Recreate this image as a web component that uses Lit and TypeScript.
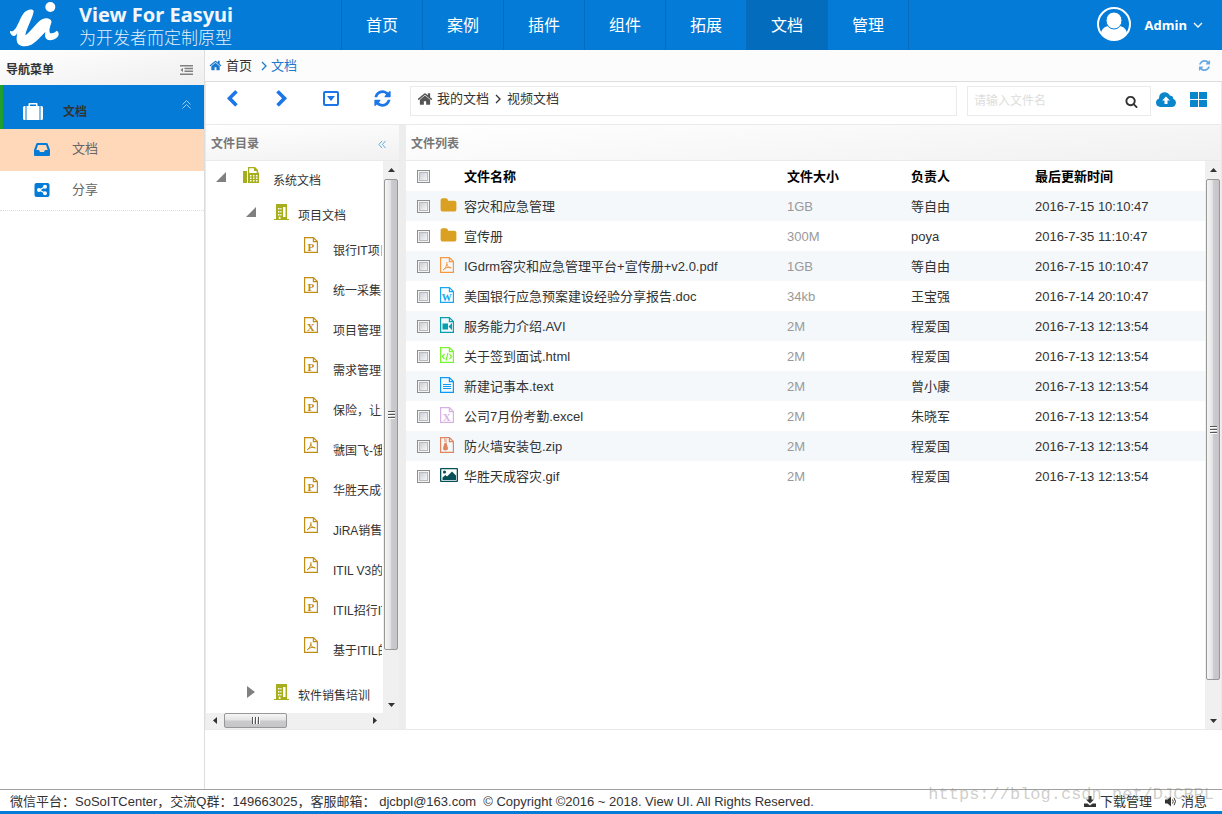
import { LitElement, html, svg, css, nothing } from "lit";
import { customElement, property, state } from "lit/decorators.js";
import { classMap } from "lit/directives/class-map.js";

/* Solid glyphs on a 1792-unit grid. */
const GLYPHS: Record<string, string> = {
  home: "M1472 992v480q0 26-19 45t-45 19h-384v-384h-256v384h-384q-26 0-45-19t-19-45v-480q0-1 .5-3t.5-3l575-474 575 474q1 2 1 6zm223-69l-62 74q-8 9-21 11h-3q-13 0-21-7l-692-577-692 577q-12 8-24 7-13-2-21-11l-62-74q-8-10-7-23.5t11-21.5l719-599q32-26 76-26t76 26l244 204v-195q0-14 9-23t23-9h192q14 0 23 9t9 23v408l219 182q10 8 11 21.5t-7 23.5z",
  refresh: "M1639 1056q0 5-1 7-64 268-268 434.5t-478 166.5q-146 0-282.5-55t-243.5-157l-129 129q-19 19-45 19t-45-19-19-45v-448q0-26 19-45t45-19h448q26 0 45 19t19 45-19 45l-137 137q71 66 161 102t187 36q134 0 250-65t186-179q11-17 53-117 8-23 30-23h192q13 0 22.5 9.5t9.5 22.5zm25-800v448q0 26-19 45t-45 19h-448q-26 0-45-19t-19-45 19-45l138-138q-148-137-349-137-134 0-250 65t-186 179q-11 17-53 117-8 23-30 23h-199q-13 0-22.5-9.5t-9.5-22.5v-7q65-268 270-434.5t480-166.5q146 0 284 55.5t245 156.5l130-129q19-19 45-19t45 19 19 45z",
  left: "M1427 301l-531 531 531 531q19 19 19 45t-19 45l-166 166q-19 19-45 19t-45-19l-742-742q-19-19-19-45t19-45l742-742q19-19 45-19t45 19l166 166q19 19 19 45t-19 45z",
  right: "M1363 877l-742 742q-19 19-45 19t-45-19l-166-166q-19-19-19-45t19-45l531-531-531-531q-19-19-19-45t19-45l166-166q19-19 45-19t45 19l742 742q19 19 19 45t-19 45z",
  search: "M1216 832q0-185-131.5-316.5t-316.5-131.5-316.5 131.5-131.5 316.5 131.5 316.5 316.5 131.5 316.5-131.5 131.5-316.5zm512 832q0 52-38 90t-90 38q-54 0-90-38l-343-342q-179 124-399 124-143 0-273.5-55.5t-225-150-150-225-55.5-273.5 55.5-273.5 150-225 225-150 273.5-55.5 273.5 55.5 225 150 150 225 55.5 273.5q0 220-124 399l343 343q37 37 37 90z",
  folder: "M1728 608v704q0 92-66 158t-158 66h-1216q-92 0-158-66t-66-158v-960q0-92 66-158t158-66h320q92 0 158 66t66 158v32h672q92 0 158 66t66 158z",
};

const glyph = (name: string, size: number) =>
  html`<svg width=${size} height=${size} viewBox="0 0 1792 1792" fill="currentColor" aria-hidden="true"><path d=${GLYPHS[name]}></path></svg>`;

const angle = (size: number) =>
  html`<svg width=${size} height=${size} viewBox="0 0 10 10" fill="none" stroke="currentColor" stroke-width="1.3" aria-hidden="true"><path d="M3 1l4 4-4 4"></path></svg>`;

const letterMark = (ch: string, size = 11) =>
  svg`<text x="6.8" y="13.5" text-anchor="middle" font-family="Liberation Serif, serif" font-weight="700" font-size=${size} fill="currentColor">${ch}</text>`;

const MARKS: Record<string, unknown> = {
  p: letterMark("P"),
  x: letterMark("X"),
  w: letterMark("W", 10),
  pdf: svg`<path d="M3 13c2-1 4-4 4-8M7 7c0 2.500 2 4 4.500 4M3.500 12.500c2-2 5-2.500 7.500-2" stroke="currentColor" fill="none"/>`,
  video: svg`<path d="M2.500 6.500h5.500v6h-5.500zM8.500 9.500l3.500-3.500v7z" fill="currentColor"/>`,
  code: svg`<path d="M4.500 7L2.300 9.500l2.200 2.500M9.500 7l2.200 2.500-2.200 2.500M7.900 6l-1.700 7.500" stroke="currentColor" stroke-width="1.200" fill="none"/>`,
  text: svg`<path d="M3 7.500h8M3 9.500h8M3 11.500h8" stroke="currentColor" stroke-width="1.200" fill="none"/>`,
  zip: svg`<path d="M4 1.500h1.500v1H4zM5.500 2.500H7v1H5.500zM4 3.500h1.500v1H4zM5.500 4.500H7v1H5.500zM4.500 6h2l1.500 5q0 2.500-2.500 2.500T3 11z" fill="currentColor"/>`,
};

const fileIcon = (kind: string) => {
  if (kind === "folder") return glyph("folder", 17);
  if (kind === "image")
    return html`<svg width="18" height="16" viewBox="0 0 18 16" aria-hidden="true"><path fill="currentColor" fill-rule="evenodd" d="M1 1h16q1 0 1 1v12q0 1-1 1H1q-1 0-1-1V2q0-1 1-1zM1.300 2.300v11.400h15.400V2.300z"/><circle cx="4.500" cy="5" r="1.600" fill="currentColor"/><path fill="currentColor" d="M2.500 13v-2.500l3-2.500 1.500 1.500L12 4.500l4 4V13z"/></svg>`;
  return html`<svg width="14" height="16" viewBox="0 0 14 16" aria-hidden="true"><path fill="none" stroke="currentColor" stroke-width="1.200" d="M.6.6h8.800l4 4v10.800H.6zM9.400.6v4h4"/>${MARKS[kind]}</svg>`;
};

/* Classic bevelled scroll bar with end arrows. */
@customElement("classic-scrollbar")
class ClassicScrollbar extends LitElement {
  @property({ type: Boolean, reflect: true }) horizontal = false;
  @property({ type: Number }) before = 0;
  @property({ type: Number }) size = 1;
  @property({ type: Number }) after = 1;

  static styles = css`
    :host { display: flex; flex-direction: column; width: 16px; flex: none; background: #f0f0f0; box-sizing: border-box; padding: 0 1px; }
    :host([horizontal]) { flex-direction: row; width: auto; height: 16px; padding: 0 0 1px; }
    .end { flex: 0 0 18px; display: grid; place-items: center; color: #333; }
    .thumb {
      box-sizing: border-box; border: 1px solid #979797; border-radius: 2px; display: flex; flex-direction: column; gap: 1px;
      align-items: center; justify-content: center; background: linear-gradient(to right, #f6f6f6, #e4e4e6 45%, #cbcbcf 55%, #c6c6ca);
    }
    :host([horizontal]) .thumb { flex-direction: row; background: linear-gradient(#f6f6f6, #e4e4e6 45%, #cbcbcf 55%, #c6c6ca); }
    .grip { width: 7px; height: 1px; background: #555; border-bottom: 1px solid #fff; }
    :host([horizontal]) .grip { width: 1px; height: 7px; border-bottom: 0; border-right: 1px solid #fff; }
  `;

  render() {
    const arrow = (d: string) => html`<svg width="7" height="7" viewBox="0 0 7 7" fill="currentColor"><path d=${d}></path></svg>`;
    const h = this.horizontal;
    return html`
      <span class="end">${arrow(h ? "M5 0v7L1 3.500z" : "M0 5h7L3.500 1z")}</span>
      <span style="flex:${this.before}"></span>
      <span class="thumb" style="flex:${this.size}"><i class="grip"></i><i class="grip"></i><i class="grip"></i></span>
      <span style="flex:${this.after}"></span>
      <span class="end">${arrow(h ? "M2 0v7L6 3.500z" : "M0 2h7L3.500 6z")}</span>
    `;
  }
}

const TREE_FILES = [
  ["p", "银行IT项目管理"],
  ["p", "统一采集平台"],
  ["x", "项目管理办法"],
  ["p", "需求管理平台"],
  ["p", "保险，让生活"],
  ["pdf", "虢国飞-饿了么"],
  ["p", "华胜天成介绍"],
  ["pdf", "JiRA销售培训"],
  ["pdf", "ITIL V3的介绍"],
  ["p", "ITIL招行IT服务"],
  ["pdf", "基于ITIL的管理"],
];

const ROWS = [
  ["folder", "#daa021", "容灾和应急管理", "1GB", "等自由", "2016-7-15 10:10:47"],
  ["folder", "#daa021", "宣传册", "300M", "poya", "2016-7-35 11:10:47"],
  ["pdf", "#f79840", "IGdrm容灾和应急管理平台+宣传册+v2.0.pdf", "1GB", "等自由", "2016-7-15 10:10:47"],
  ["w", "#18a8f1", "美国银行应急预案建设经验分享报告.doc", "34kb", "王宝强", "2016-7-14 20:10:47"],
  ["video", "#059fae", "服务能力介绍.AVI", "2M", "程爱国", "2016-7-13 12:13:54"],
  ["code", "#78f52c", "关于签到面试.html", "2M", "程爱国", "2016-7-13 12:13:54"],
  ["text", "#0c9af5", "新建记事本.text", "2M", "曾小康", "2016-7-13 12:13:54"],
  ["x", "#d9b0e6", "公司7月份考勤.excel", "2M", "朱晓军", "2016-7-13 12:13:54"],
  ["zip", "#e08562", "防火墙安装包.zip", "2M", "程爱国", "2016-7-13 12:13:54"],
  ["image", "#07505a", "华胜天成容灾.gif", "2M", "程爱国", "2016-7-13 12:13:54"],
];

const NAV = ["首页", "案例", "插件", "组件", "拓展", "文档", "管理"];

@customElement("app-root")
class AppRoot extends LitElement {
  @state() private activeNav = "文档";
  @state() private treeOpen = true;

  static styles = css`
    :host {
      display: flex; flex-direction: column; height: 100vh; position: relative; overflow: hidden; background: #fff;
      font: 13px/20px "Liberation Sans", "Noto Sans CJK SC", sans-serif; color: #333;
    }
    * { box-sizing: border-box; }
    a { color: inherit; text-decoration: none; }
    button { font: inherit; color: inherit; background: none; border: 0; padding: 0; margin: 0; cursor: pointer; }
    ul { list-style: none; margin: 0; padding: 0; }
    svg { display: block; flex: none; }

    .top { flex: none; height: 50px; display: flex; background: #047bd7; color: #fff; }
    .brand { width: 341px; display: flex; padding-left: 10px; gap: 19px; }
    .brand-text { display: flex; flex-direction: column; padding-top: 2px; }
    .brand-name { font: 700 20px/26px "Noto Sans", sans-serif; color: #f2f6fa; white-space: nowrap; }
    .brand-sub { font: 300 17px/18px "Noto Sans CJK SC", sans-serif; color: #e4f0fa; white-space: nowrap; }
    .nav { display: flex; border-right: 1px solid #056bbb; }
    .nav a { border-left: 1px solid #056bbb; padding: 2px 24px 0; font-size: 16px; line-height: 48px; }
    .nav a.active { background: #046cbd; }
    .user { margin-left: auto; padding-right: 19px; display: flex; align-items: center; gap: 14px; font: 700 13px/48px "Open Sans", sans-serif; }
    .user .face { margin-bottom: 2px; }
    .user .caret { transform: rotate(90deg); margin-left: -8px; }

    .body { flex: 1; min-height: 0; display: flex; }
    .side { flex: none; width: 205px; border-right: 1px solid #ddd; }
    .side-head { height: 35px; display: flex; align-items: center; justify-content: space-between; padding: 4px 11px 0 6px; font-size: 12px; font-weight: 700; background: linear-gradient(170deg, #fff, #efefef); }
    .side-head svg { color: #808080; }
    .group { width: 100%; height: 44px; display: flex; align-items: center; background: #047bd7; border-left: 3px solid #1f9f2f; padding: 8px 13px 0 20px; font-size: 12px; font-weight: 700; }
    .group > span { margin-left: 20px; flex: 1; text-align: left; padding-top: 2px; }
    .group .suitcase { color: #fff; }
    .group .fold { color: #9ccdf5; align-self: flex-start; margin-top: 7px; }
    .sub { display: flex; align-items: center; gap: 22px; height: 40px; padding: 0 34px 2px; color: #666; border-bottom: 1px dotted #ddd; }
    .sub svg { color: #047bd7; }
    .sub.active { background: #ffd8ba; height: 42px; border-bottom: 0; }

    .main { flex: 1; min-width: 0; display: flex; flex-direction: column; padding-bottom: 59px; }
    .crumbs { flex: none; height: 32px; display: flex; align-items: center; padding: 0 11px 0 4px; gap: 4px; background: #fcfcfc; border-bottom: 1px solid #ddd; }
    .crumbs .home, .crumbs .here { color: #1a79cd; }
    .crumbs .sep { color: #1a79cd; margin-left: 3px; margin-right: -2px; }
    .crumbs button { margin-left: auto; color: #67a9e6; }
    .work { flex: 1; min-height: 0; display: flex; flex-direction: column; border: 1px solid #eaeaea; border-top: 0; }
    .tools { flex: none; height: 43px; display: flex; align-items: flex-start; padding: 4px 14px 0 17px; border-bottom: 1px solid #eaeaea; }
    .tool { width: 50px; height: 25px; display: grid; place-items: center; color: #1c76e8; justify-items: start; }
    .tool.last { width: 37px; }
    .path { flex: 1; height: 30px; border: 1px solid #eaeaea; padding: 0 6px; display: flex; align-items: center; gap: 4px; line-height: 26px; }
    .path > * { margin-bottom: 4px; }
    .path .house { color: #555; }
    .find { width: 184px; height: 30px; margin-left: 10px; border: 1px solid #eaeaea; display: flex; align-items: center; padding: 0 12px 0 6px; }
    .find input { flex: 1; min-width: 0; border: 0; outline: 0; padding: 0; font: inherit; font-size: 12px; color: #333; background: none; }
    .find input::placeholder { color: #ddd; opacity: 1; }
    .action { height: 26px; display: grid; place-items: center; color: #0a86cc; margin-left: 5px; }
    .action + .action { margin-left: 14px; }

    .split { flex: 1; min-height: 0; display: flex; }
    .panel-head { flex: none; height: 36px; display: flex; align-items: center; justify-content: space-between; padding: 2px 13px 0 5px; font-size: 12px; font-weight: 700; color: #777; background: linear-gradient(175deg, #fff, #f1f1f1); border-bottom: 1px solid #eaeaea; }
    .panel-head svg { color: #4da3dc; margin-top: 2px; }
    .dir { flex: none; width: 193px; display: flex; flex-direction: column; }
    .dir .view { margin-right: 1px; }
    .divider { flex: none; width: 7px; background: #ededed; }
    .list { flex: 1; min-width: 0; display: flex; flex-direction: column; }
    .scroll { flex: 1; min-height: 0; display: flex; }
    .view { flex: 1; min-width: 0; overflow: hidden; }
    .hrow { display: flex; background: #f0f0f0; }
    .hrow classic-scrollbar { flex: 1; }
    .corner { width: 16px; }

    .node { display: flex; align-items: flex-start; white-space: nowrap; font-size: 12px; width: 100%; text-align: left; }
    .node > span { height: 30px; display: flex; align-items: center; flex: none; }
    .node .arrow { color: #808080; }
    .node .icon { color: #a5af1b; }
    .root { height: 36px; padding-left: 10px; line-height: 40px; }
    .root .arrow { width: 27px; padding-top: 2px; }
    .root .icon { width: 30px; padding-bottom: 2px; }
    .branch { height: 33px; padding-left: 40px; line-height: 38px; }
    .branch .arrow { width: 28px; }
    .branch .icon { width: 24px; }
    .leaf { height: 40px; padding-left: 98px; line-height: 42px; }
    .leaf .icon { width: 29px; color: #c08d15; }
    .files { margin-bottom: 7px; }

    table { width: 100%; border-collapse: collapse; table-layout: fixed; }
    th, td { height: 30px; padding: 2px 0 0 10px; text-align: left; white-space: nowrap; overflow: hidden; }
    th { color: #000; }
    tbody tr:nth-child(odd) { background: #f4f8fb; }
    .c-small { width: 24px; }
    .c-mid { width: 124px; }
    .c-time { width: 180px; }
    .size { color: #999; }
    .kind svg { margin-bottom: 4px; }
    .kind { overflow: visible; }
    input[type="checkbox"] {
      appearance: none; display: block; width: 13px; height: 13px; margin: 0 0 2px 1px; border: 1px solid #8e8f8f; padding: 2px;
      background: linear-gradient(135deg, #cbcfd5, #f6f6f6) content-box; box-shadow: inset 0 0 0 1px #f4f4f4, inset 0 0 0 2px #b8bcc0;
    }
    input[type="checkbox"]:checked { background: #047bd7 content-box; }

    .foot { flex: none; height: 25px; display: flex; align-items: center; justify-content: space-between; padding: 0 15px 0 10px; border-top: 1px solid #a0a0a0; border-bottom: 3px solid #047bd7; white-space: nowrap; background: #fff; }
    .foot p { margin: 0; display: flex; gap: 7px; padding-top: 2px; }
    .foot-links { display: flex; gap: 13px; padding-top: 2px; }
    .foot-links a { display: flex; align-items: center; gap: 4px; }
    .stamp { position: absolute; right: 8px; bottom: 9px; font: 17px/20px "Liberation Mono", monospace; color: rgba(130, 130, 120, 0.4); pointer-events: none; }
  `;

  private arrow(open: boolean) {
    return html`<svg width="10" height="12" viewBox="0 0 10 12" fill="currentColor" aria-hidden="true"><path d=${open ? "M10 1v10H0z" : "M1 0l8 6-8 6z"}></path></svg>`;
  }

  private building() {
    return html`<svg width="15" height="16" viewBox="0 0 15 16" aria-hidden="true"><path fill="currentColor" d="M2 0h11v15h2v1H0v-1h2z"></path><path fill="#fff" d="M4 4h1.500v1.500H4zM6.300 4h1.200v1.500H6.300zM4 7h1.500v1.500H4zM6.300 7h1.200v1.500H6.300zM4 10h1.500v1.500H4zM6.300 10h1.200v1.500H6.300zM4.800 12.800h1.700V15H4.800zM9 3h2.500v10H9z"></path></svg>`;
  }

  private header() {
    return html`
      <header class="top">
        <div class="brand">
          <svg width="50" height="48" viewBox="30 0 150 144" fill="#fff" role="img" aria-label="ui">
            <circle cx="151" cy="21" r="15"></circle>
            <path d="M31 92C36 97 40 92 46 86C56 72 62 50 72 38C80 28 100 24 101 34C100 50 78 88 76 106C90 98 110 65 128 57C140 52 157 57 154 68C150 80 146 92 150 99C158 102 166 96 171 92C177 96 178 106 172 112C160 123 140 125 136 112C134 106 136 100 136 96C122 110 105 130 90 136C78 141 58 140 52 128C48 118 50 108 52 100C48 106 44 110 38 107C32 104 28 96 31 92Z"></path>
          </svg>
          <div class="brand-text">
            <span class="brand-name">View For Easyui</span>
            <span class="brand-sub">为开发者而定制原型</span>
          </div>
        </div>
        <nav class="nav">
          ${NAV.map((n) => html`<a href="#" class=${classMap({ active: n === this.activeNav })} @click=${(e: Event) => { e.preventDefault(); this.activeNav = n; }}>${n}</a>`)}
        </nav>
        <button class="user">
          <svg class="face" width="34" height="34" viewBox="0 0 34 34" aria-hidden="true">
            <circle cx="17" cy="17" r="16" fill="none" stroke="#fff" stroke-width="2"></circle>
            <path fill="#fff" d="M4 26c1-4 3-6 7-7 4 3 8 3 12 0 4 1 6 3 7 7-3 5-8 7-13 7s-10-2-13-7z"></path>
            <ellipse cx="17" cy="13.500" rx="8" ry="8.500" fill="#fff" stroke="#047bd7"></ellipse>
          </svg>
          <span>Admin</span>
          <span class="caret">${angle(10)}</span>
        </button>
      </header>`;
  }

  private sidebar() {
    return html`
      <aside class="side">
        <div class="side-head">
          <span>导航菜单</span>
          <svg width="13" height="10" viewBox="0 0 13 10" fill="currentColor" aria-hidden="true"><path d="M0 0h13v1.500H0zM4.500 2.800H13v1.500H4.500zM4.500 5.600H13v1.500H4.500zM0 8.500h13V10H0zM3 2.800v4.300L.5 5z"></path></svg>
        </div>
        <button class="group">
          <svg class="suitcase" width="20" height="17" viewBox="0 0 20 17" fill="currentColor" aria-hidden="true"><path d="M2.500 3v14H1.500Q0 17 0 15.500v-11Q0 3 1.500 3zM17.500 3h1Q20 3 20 4.500v11q0 1.500-1.500 1.500h-1zM5.500 3V1Q5.500 0 6.500 0h7q1 0 1 1v2h2v14h-13V3zM7 3h6V1.500H7z" fill-rule="evenodd"></path></svg>
          <span>文档</span>
          <svg class="fold" width="9" height="9" viewBox="0 0 9 9" fill="none" stroke="currentColor" aria-hidden="true"><path d="M.5 4.500l4-4 4 4M.5 8.500l4-4 4 4"></path></svg>
        </button>
        <a class="sub active" href="#">
          <svg width="16" height="13" viewBox="0 0 16 13" fill="currentColor" aria-hidden="true"><path fill-rule="evenodd" d="M3.500 0h9q1 0 1.300 1L16 7v5q0 1-1 1H1q-1 0-1-1V7l2.200-6Q2.500 0 3.500 0zM4 2L2.300 7H5l1 2h4l1-2h2.700L12 2z"></path></svg>
          <span>文档</span>
        </a>
        <a class="sub" href="#">
          <svg width="16" height="14" viewBox="0 0 16 14" aria-hidden="true"><rect x=".5" width="15" height="14" rx="2" fill="currentColor"></rect><path d="M11 3.800L5.500 7l5.500 3.200" stroke="#fff" stroke-width="1.300" fill="none"></path><g fill="#fff"><circle cx="11" cy="3.800" r="2"></circle><circle cx="5" cy="7" r="2"></circle><circle cx="11" cy="10.200" r="2"></circle></g></svg>
          <span>分享</span>
        </a>
      </aside>`;
  }

  private toolbar() {
    return html`
      <div class="tools">
        <button class="tool" aria-label="后退">${glyph("left", 18)}</button>
        <button class="tool" aria-label="前进">${glyph("right", 18)}</button>
        <button class="tool" aria-label="展开">
          <svg width="16" height="15" viewBox="0 0 16 15" aria-hidden="true"><rect x="1" y="1" width="14" height="13" rx="1" fill="none" stroke="currentColor" stroke-width="2"></rect><path d="M4 5h8l-4 5z" fill="currentColor"></path></svg>
        </button>
        <button class="tool last" aria-label="刷新">${glyph("refresh", 19)}</button>
        <div class="path">
          <span class="house">${glyph("home", 16)}</span>
          <a href="#">我的文档</a>
          ${angle(10)}
          <a href="#">视频文档</a>
        </div>
        <label class="find">
          <input type="text" placeholder="请输入文件名" aria-label="文件名" />
          <button aria-label="搜索">${glyph("search", 13)}</button>
        </label>
        <button class="action" aria-label="上传">
          <svg width="20" height="15" viewBox="0 0 20 15" aria-hidden="true"><path fill="currentColor" d="M4.500 15Q0 14.500 0 10.500q0-3 3-4Q3 .5 8.500.3q4 0 5.500 3.500 3-.5 3.300 3Q20 8 20 10.800 19.500 15 15.500 15z"></path><path fill="#fff" d="M10 4.500l3.800 4h-2.300v3.500h-3V8.500H6.200z"></path></svg>
        </button>
        <button class="action" aria-label="视图">
          <svg width="17" height="15" viewBox="0 0 17 15" fill="currentColor" aria-hidden="true"><path d="M0 0h8v7H0zM9 0h8v7H9zM0 8h8v7H0zM9 8h8v7H9z"></path></svg>
        </button>
      </div>`;
  }

  private tree() {
    return html`
      <section class="dir">
        <div class="panel-head">
          <span>文件目录</span>
          <svg width="8" height="9" viewBox="0 0 9 9" fill="none" stroke="currentColor" aria-hidden="true"><path d="M4.500.5l-3.500 4 3.500 4M8.500.5L5 4.500l3.500 4"></path></svg>
        </div>
        <div class="scroll">
          <div class="view">
            <button class="node root">
              <span class="arrow">${this.arrow(true)}</span>
              <span class="icon"><svg width="16" height="16" viewBox="0 0 16 16" aria-hidden="true"><path fill="currentColor" fill-rule="evenodd" d="M0 4h4v12H0zM5 0h7l3 3v2l1 1v10H5zM6.200 1.200V6h7.500V4H11V1.200z"></path><path fill="#fff" d="M7 8h1.500v1.500H7zM10 8h1.500v1.500H10zM13 8h1.500v1.500H13zM7 10.500h1.500V12H7zM10 10.500h1.500V12H10zM13 10.500h1.500V12H13zM7 13h1.500v1.500H7zM10 13h1.500v1.500H10zM13 13h1.500v1.500H13z"></path></svg></span>
              系统文档
            </button>
            <button class="node branch" @click=${() => (this.treeOpen = !this.treeOpen)}>
              <span class="arrow">${this.arrow(this.treeOpen)}</span><span class="icon">${this.building()}</span>项目文档
            </button>
            ${this.treeOpen
              ? html`<ul class="files">${TREE_FILES.map(([kind, name]) => html`<li><a class="node leaf" href="#"><span class="icon">${fileIcon(kind)}</span>${name}</a></li>`)}</ul>`
              : nothing}
            <button class="node branch"><span class="arrow">${this.arrow(false)}</span><span class="icon">${this.building()}</span>软件销售培训</button>
          </div>
          <classic-scrollbar before="0" size="470" after="45"></classic-scrollbar>
        </div>
        <div class="hrow">
          <classic-scrollbar horizontal before="0" size="62" after="79"></classic-scrollbar>
          <div class="corner"></div>
        </div>
      </section>`;
  }

  private fileTable() {
    return html`
      <section class="list">
        <div class="panel-head"><span>文件列表</span></div>
        <div class="scroll">
          <div class="view">
            <table>
              <colgroup><col class="c-small" /><col class="c-small" /><col /><col class="c-mid" /><col class="c-mid" /><col class="c-time" /></colgroup>
              <thead>
                <tr><th><input type="checkbox" aria-label="全选" /></th><th></th><th>文件名称</th><th>文件大小</th><th>负责人</th><th>最后更新时间</th></tr>
              </thead>
              <tbody>
                ${ROWS.map(([kind, color, name, size, owner, time]) => html`
                  <tr>
                    <td><input type="checkbox" aria-label=${name} /></td>
                    <td class="kind" style="color:${color}">${fileIcon(kind)}</td>
                    <td>${name}</td>
                    <td class="size">${size}</td>
                    <td>${owner}</td>
                    <td>${time}</td>
                  </tr>`)}
              </tbody>
            </table>
          </div>
          <classic-scrollbar before="0" size="500" after="31"></classic-scrollbar>
        </div>
      </section>`;
  }

  render() {
    return html`
      ${this.header()}
      <div class="body">
        ${this.sidebar()}
        <main class="main">
          <div class="crumbs">
            <span class="home">${glyph("home", 13)}</span>
            <a href="#">首页</a>
            <span class="sep">${angle(10)}</span>
            <a class="here" href="#">文档</a>
            <button aria-label="刷新">${glyph("refresh", 13)}</button>
          </div>
          <div class="work">
            ${this.toolbar()}
            <div class="split">${this.tree()}<div class="divider"></div>${this.fileTable()}</div>
          </div>
        </main>
      </div>
      <footer class="foot">
        <p><span>微信平台：SoSoITCenter，交流Q群：149663025，客服邮箱： djcbpl@163.com</span><span>© Copyright ©2016 ~ 2018. View UI. All Rights Reserved.</span></p>
        <div class="foot-links">
          <a href="#"><svg width="12" height="11" viewBox="0 0 12 11" fill="currentColor" aria-hidden="true"><path d="M4.500 0h3v3.500H10l-4 4-4-4h2.500zM0 7.500h3.500L6 9.500l2.500-2H12V11H0z"></path></svg>下载管理</a>
          <a href="#"><svg width="12" height="11" viewBox="0 0 12 11" aria-hidden="true"><path fill="currentColor" d="M0 3.500h2.500L6 .5v10l-3.500-3H0z"></path><path fill="none" stroke="currentColor" d="M7.500 3.500q1.500 2 0 4M9 1.800q3 3.700 0 7.400"></path></svg>消息</a>
        </div>
      </footer>
      <div class="stamp">https://blog.csdn.net/DJCBPL</div>
    `;
  }
}
